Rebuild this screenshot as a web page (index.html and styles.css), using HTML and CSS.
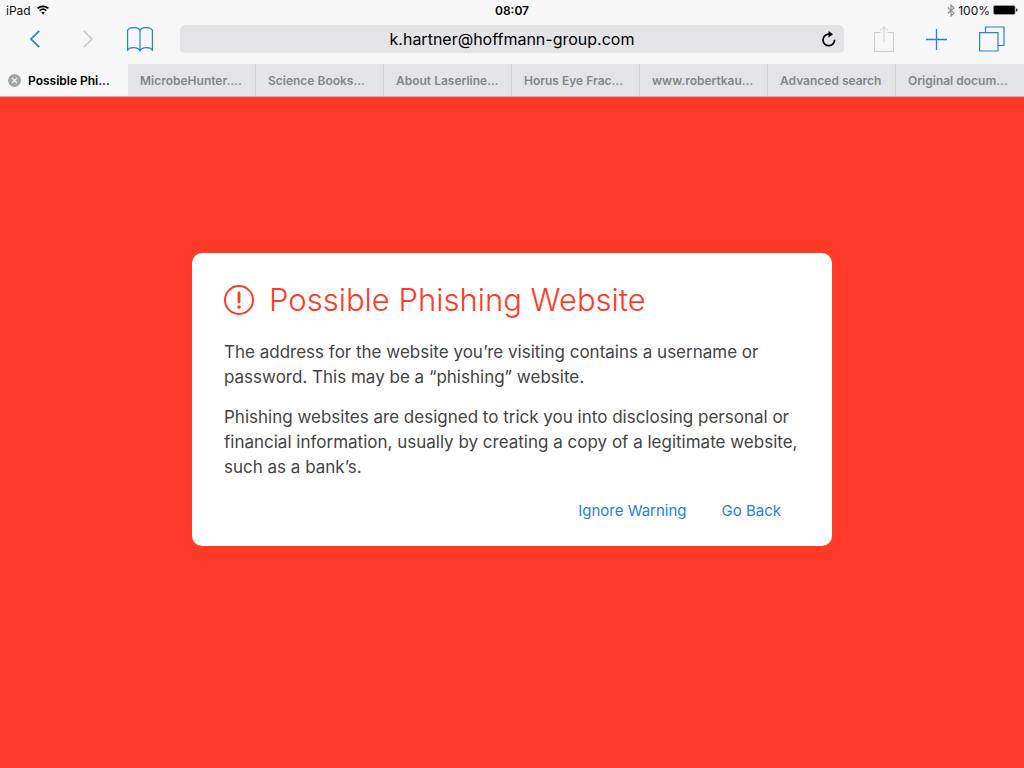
FILE: index.html
```html
<!DOCTYPE html>
<html lang="en">
<head>
    <meta charset="UTF-8">
    <meta name="viewport" content="width=device-width, initial-scale=1.0">
    <title>Possible Phishing Website</title>
    <link rel="stylesheet" href="styles.css">
</head>
<body>
    <header class="browser">
        <div class="status-bar">
            <div class="status-left">
                <span>iPad</span>
                <svg width="12" height="10" viewBox="0 0 12 10" fill="none" stroke="#000" stroke-width="1.7">
                    <path d="M0.7 3.4C3.7 0.6 8.3 0.6 11.3 3.4M2.7 5.6C4.6 3.9 7.4 3.9 9.3 5.6"/>
                    <path d="M6 9.4L4.2 7.5C5.2 6.6 6.8 6.6 7.8 7.5Z" fill="#000" stroke="none"/>
                </svg>
            </div>
            <time class="clock">08:07</time>
            <div class="status-right">
                <svg width="8" height="13" viewBox="0 0 8 13" fill="none" stroke="#8e8e90" stroke-width="1.1">
                    <path d="M0.7 3.5L7 9L4 12V1L7 4L0.7 9.5"/>
                </svg>
                <span>100%</span>
                <svg width="25" height="10" viewBox="0 0 25 10">
                    <rect x="0.2" y="0.2" width="22.2" height="9.6" rx="1.8" fill="#777"/>
                    <rect x="1" y="1" width="20.6" height="8" rx="1.2" fill="#000"/>
                    <path d="M23.2 3.2C25 3.8 25 6.2 23.2 6.8Z" fill="#000"/>
                </svg>
            </div>
        </div>

        <div class="toolbar">
            <nav class="nav-buttons">
                <button type="button" class="icon-button" aria-label="Back">
                    <svg width="10" height="18" viewBox="0 0 10 18"><path d="M9.3 0.8L1 9L9.3 17.2" stroke-width="1.7"/></svg>
                </button>
                <button type="button" class="icon-button" aria-label="Forward" disabled>
                    <svg width="10" height="18" viewBox="0 0 10 18"><path d="M0.7 0.8L9 9L0.7 17.2" stroke-width="1.7"/></svg>
                </button>
                <button type="button" class="icon-button" aria-label="Bookmarks">
                    <svg width="26" height="26" viewBox="0 0 26 26">
                        <path d="M13 5C12.6 0.6 2.4 0.6 0.6 4.2V23.8C3 20.8 11 20.8 13 24.8C15 20.8 23 20.8 25.4 23.8V4.2C23.6 0.6 13.4 0.6 13 5V24.8" stroke-width="1.2"/>
                    </svg>
                </button>
            </nav>
            <div class="address">
                <input type="text" class="address-input" aria-label="Address" value="k.hartner@hoffmann-group.com">
                <button type="button" class="reload" aria-label="Reload">
                    <svg width="16" height="16" viewBox="0 0 16 16">
                        <path d="M8.5 3.1H7.8A5.8 5.8 0 1 0 13.6 8.7" fill="none" stroke="#000" stroke-width="1.7"/>
                        <path d="M7.5 0L12 3.3L7.5 6.5Z" fill="#000"/>
                    </svg>
                </button>
            </div>
            <div class="page-buttons">
                <button type="button" class="icon-button" aria-label="Share" disabled>
                    <svg width="20" height="28" viewBox="0 0 20 28"><path d="M6.5 7.5H0.5V26.5H19.5V7.5H13.5M10 17V1.5M6 5.5L10 1.5L14 5.5"/></svg>
                </button>
                <button type="button" class="icon-button" aria-label="New tab">
                    <svg width="21" height="21" viewBox="0 0 21 21"><path d="M10.5 0V21M0 10.5H21" stroke-width="1.3"/></svg>
                </button>
                <button type="button" class="icon-button" aria-label="Show tabs">
                    <svg width="26" height="26" viewBox="0 0 26 26"><path d="M0.6 6.6H19V25H0.6ZM6.5 6.6V1H25V19.5H19" stroke-width="1.2"/></svg>
                </button>
            </div>
        </div>

        <div class="tabs">
            <div class="tab tab-active">
                <button type="button" class="tab-close" aria-label="Close tab">
                    <svg width="13" height="13" viewBox="0 0 13 13">
                        <circle cx="6.5" cy="6.5" r="6.5" fill="#a5a5a7"/>
                        <path d="M4 4L9 9M9 4L4 9" stroke="#f7f7f7" stroke-width="1.2"/>
                    </svg>
                </button>
                <a href="#" class="tab-title">Possible Phi...</a>
            </div>
            <div class="tab"><a href="#" class="tab-title">MicrobeHunter....</a></div>
            <div class="tab"><a href="#" class="tab-title">Science Books...</a></div>
            <div class="tab"><a href="#" class="tab-title">About Laserline...</a></div>
            <div class="tab"><a href="#" class="tab-title">Horus Eye Frac...</a></div>
            <div class="tab"><a href="#" class="tab-title">www.robertkau...</a></div>
            <div class="tab"><a href="#" class="tab-title">Advanced search</a></div>
            <div class="tab"><a href="#" class="tab-title">Original docum...</a></div>
        </div>
    </header>

    <main class="page">
        <section class="warning">
            <div class="warning-header">
                <svg width="30" height="30" viewBox="0 0 30 30">
                    <circle cx="15" cy="15" r="14" fill="none" stroke="#ff3b27" stroke-width="2"/>
                    <path d="M15 8V17" stroke="#ff3b27" stroke-width="2.8" stroke-linecap="round"/>
                    <circle cx="15" cy="22" r="1.8" fill="#ff3b27"/>
                </svg>
                <h1>Possible Phishing Website</h1>
            </div>
            <p>The address for the website you’re visiting contains a username or password. This may be a “phishing” website.</p>
            <p>Phishing websites are designed to trick you into disclosing personal or financial information, usually by creating a copy of a legitimate website, such as a bank’s.</p>
            <div class="actions">
                <button type="button">Ignore Warning</button>
                <button type="button">Go Back</button>
            </div>
        </section>
    </main>
</body>
</html>
```

FILE: styles.css
```css
* {
    box-sizing: border-box;
}
body {
    margin: 0;
    min-height: 100vh;
    display: flex;
    flex-direction: column;
    font-family: Inter, "Liberation Sans", sans-serif;
    background-color: #ff3b27;
}
button {
    padding: 0;
    border: none;
    background: none;
    font-family: inherit;
    cursor: pointer;
}
svg {
    display: block;
}
.browser {
    background: #f7f7f7;
}

/* Status bar */
.status-bar {
    display: grid;
    grid-template-columns: 1fr auto 1fr;
    align-items: center;
    height: 20px;
    padding: 0 6px;
    font-size: 12px;
    color: #111;
}
.status-left,
.status-right {
    display: flex;
    align-items: center;
    gap: 6px;
}
.status-right {
    justify-content: flex-end;
    gap: 3px;
}
.clock {
    font-weight: 600;
    color: #000;
}

/* Toolbar */
.toolbar {
    display: flex;
    align-items: center;
    height: 44px;
    padding: 0 19px 6px 30px;
}
.nav-buttons {
    display: flex;
    align-items: center;
    gap: 34px;
    margin-right: 27px;
}
.nav-buttons .icon-button:first-child {
    margin-right: 9px;
}
.page-buttons {
    display: flex;
    align-items: center;
    gap: 32px;
    margin-left: 30px;
}
.icon-button svg {
    fill: none;
    stroke: #2380f4;
}
.icon-button:disabled svg {
    stroke: #cdcdcf;
}
.address {
    flex: 1;
    position: relative;
}
.address-input {
    display: block;
    width: 100%;
    height: 28px;
    padding: 0 32px;
    border: none;
    border-radius: 5px;
    background: #e4e4e7;
    font-family: inherit;
    font-size: 16px;
    color: #000;
    text-align: center;
}
.reload {
    position: absolute;
    top: 6px;
    right: 7px;
}

/* Tabs */
.tabs {
    display: grid;
    grid-auto-flow: column;
    grid-auto-columns: minmax(0, 1fr);
    height: 33px;
    border-bottom: 1px solid #c9b5b4;
}
.tab {
    display: flex;
    align-items: center;
    padding-left: 12px;
    background: #e4e4e7;
    border-right: 1px solid #d0d0d3;
}
.tab:last-child {
    border-right: none;
}
.tab-active {
    gap: 7px;
    padding-left: 8px;
    background: #f7f7f7;
    border-right: none;
}
.tab-title {
    font-size: 12px;
    font-weight: 600;
    color: #858587;
    text-decoration: none;
    white-space: nowrap;
}
.tab-active .tab-title {
    color: #000;
}

/* Warning */
.page {
    flex: 1;
    display: flex;
    justify-content: center;
    align-items: flex-start;
    padding: 156px 20px 20px;
}
.warning {
    width: 100%;
    max-width: 640px;
    padding: 27px 32px 23px;
    border-radius: 10px;
    background: #fff;
    color: #444;
}
.warning-header {
    display: flex;
    align-items: center;
    gap: 15px;
    margin-bottom: 20px;
    color: #ff3b27;
}
.warning h1 {
    margin: 0;
    font-size: 31px;
    font-weight: 300;
    line-height: 40px;
}
.warning p {
    margin: 0 0 15px;
    font-size: 17px;
    line-height: 25px;
}
.actions {
    display: flex;
    justify-content: flex-end;
    gap: 35px;
    padding: 4px 19px 0 0;
}
.actions button {
    font-size: 15px;
    line-height: 24px;
    color: #1a7ff0;
}
```
